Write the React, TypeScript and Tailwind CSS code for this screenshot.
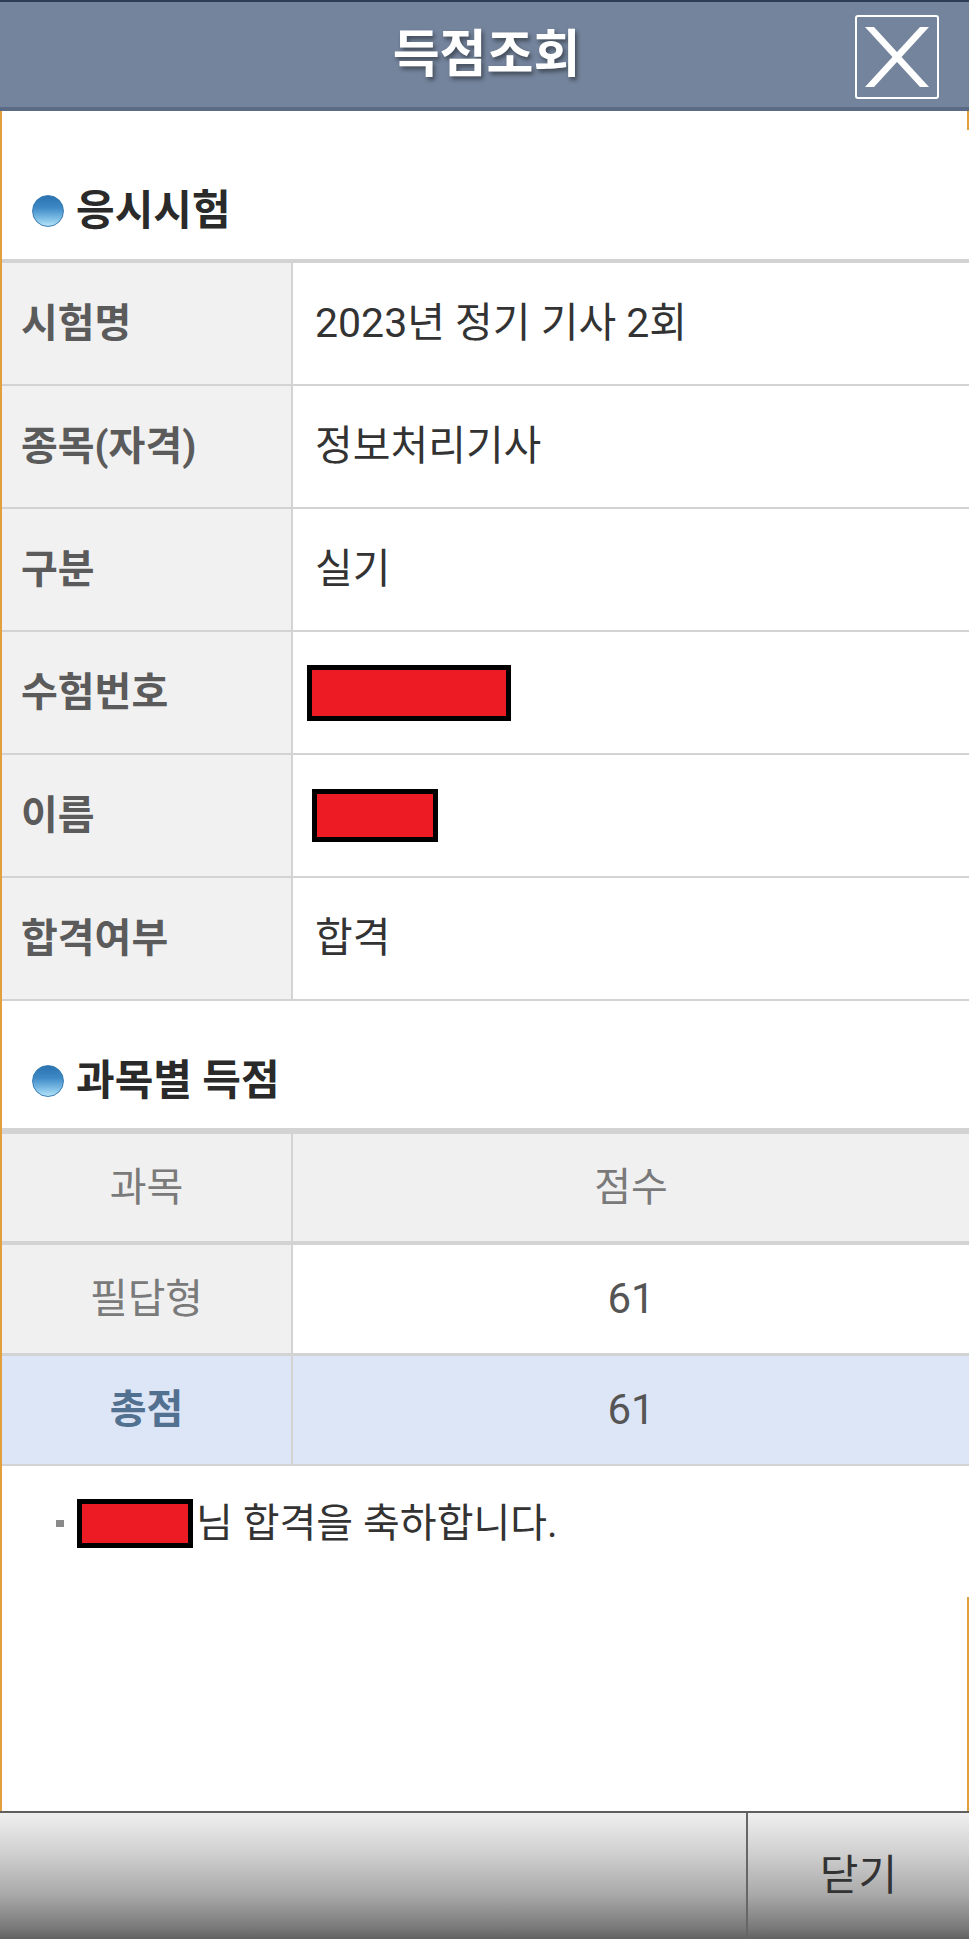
import React from "react";

const FONT = 'Roboto, "Noto Sans CJK KR", sans-serif';

function Bullet() {
  return (
    <span className="inline-block w-[32px] h-[32px] rounded-full border border-[#3a7db3] bg-[linear-gradient(to_bottom,#2a72b0_0%,#3f8ac6_40%,#7dbde6_75%,#b6e2f6_100%)] shrink-0" />
  );
}

function SectionHeading({ title, h }: { title: string; h: string }) {
  return (
    <div className={`${h} pt-[32px] flex items-center pl-[30px]`}>
      <Bullet />
      <span className="ml-[12px] text-[42px] font-bold text-[#2a2a2a] leading-none">{title}</span>
    </div>
  );
}

function InfoRow({ label, children }: { label: string; children: React.ReactNode }) {
  return (
    <div className="flex h-[123px] border-b-2 border-[#d3d3d3]">
      <div className="w-[291px] shrink-0 bg-[#f1f1f1] border-r-2 border-[#d3d3d3] flex items-center pl-[19px]">
        <span className="text-[40px] font-bold text-[#5b5b5b] leading-none">{label}</span>
      </div>
      <div className="flex-1 flex items-center pl-[22px]">{children}</div>
    </div>
  );
}

function Redact({ w, h }: { w: string; h: string }) {
  return <span className={`inline-block ${w} ${h} bg-[#ed1c24] border-[5px] border-black`} />;
}

export default function App() {
  return (
    <div className="w-[969px] h-[1939px] flex flex-col bg-white overflow-hidden" style={{ fontFamily: FONT }}>
      {/* Header */}
      <div className="relative h-[111px] shrink-0 bg-[#74849c] border-t-2 border-[#2f3e56] border-b-4 border-b-[#5b6a85] flex items-center justify-center">
        <span className="text-[51px] font-bold text-white leading-none ml-[4px] [text-shadow:2px_3px_4px_rgba(0,0,0,0.45)]">
          득점조회
        </span>
        <div className="absolute right-[30px] top-[13px] w-[84px] h-[84px] border-2 border-white rounded-[3px] flex items-center justify-center">
          <svg width="64" height="60" viewBox="0 0 64 60">
            <polygon points="0,0 9,0 64,60 55,60" fill="white" />
            <polygon points="55,0 64,0 9,60 0,60" fill="white" />
          </svg>
        </div>
      </div>

      {/* Body */}
      <div className="flex-1 flex flex-col border-l-2 border-r-2 border-[#e2a03c]">
        <div className="h-[19px] bg-white" />
        <div className="-mr-[2px] bg-white pb-[49px]">
          <SectionHeading title="응시시험" h="h-[129px]" />
          <div className="border-t-4 border-[#d3d3d3]">
            <InfoRow label="시험명">
              <span className="text-[41px] text-[#333] leading-none">2023년 정기 기사 2회</span>
            </InfoRow>
            <InfoRow label="종목(자격)">
              <span className="text-[41px] text-[#333] leading-none">정보처리기사</span>
            </InfoRow>
            <InfoRow label="구분">
              <span className="text-[41px] text-[#333] leading-none">실기</span>
            </InfoRow>
            <InfoRow label="수험번호">
              <span className="-ml-[8px] flex">
                <Redact w="w-[204px]" h="h-[56px]" />
              </span>
            </InfoRow>
            <InfoRow label="이름">
              <span className="-ml-[3px] flex">
                <Redact w="w-[126px]" h="h-[53px]" />
              </span>
            </InfoRow>
            <InfoRow label="합격여부">
              <span className="text-[41px] text-[#333] leading-none">합격</span>
            </InfoRow>
          </div>

          <SectionHeading title="과목별 득점" h="h-[127px]" />
          <div className="border-t-[6px] border-[#d3d3d3]">
            <div className="flex h-[111px] border-b-4 border-[#d3d3d3] bg-[#f0f0f0]">
              <div className="w-[291px] shrink-0 border-r-2 border-[#d3d3d3] flex items-center justify-center">
                <span className="text-[40px] text-[#7a7a7a] leading-none">과목</span>
              </div>
              <div className="flex-1 flex items-center justify-center">
                <span className="text-[40px] text-[#7a7a7a] leading-none">점수</span>
              </div>
            </div>
            <div className="flex h-[111px] border-b-[3px] border-[#d3d3d3]">
              <div className="w-[291px] shrink-0 bg-[#f0f0f0] border-r-2 border-[#d3d3d3] flex items-center justify-center">
                <span className="text-[41px] text-[#7a7a7a] leading-none">필답형</span>
              </div>
              <div className="flex-1 flex items-center justify-center">
                <span className="text-[42px] text-[#555] leading-none">61</span>
              </div>
            </div>
            <div className="flex h-[110px] border-b-2 border-[#d3d3d3] bg-[#dde6f7]">
              <div className="w-[291px] shrink-0 border-r-2 border-[#d3d3d3] flex items-center justify-center">
                <span className="text-[40px] font-bold text-[#52708f] leading-none">총점</span>
              </div>
              <div className="flex-1 flex items-center justify-center">
                <span className="text-[42px] text-[#555] leading-none">61</span>
              </div>
            </div>
          </div>

          <div className="flex items-center pl-[54px] mt-[33px]">
            <span className="inline-block w-[8px] h-[7px] bg-[#8a8a8a]" />
            <span className="ml-[13px] flex">
              <Redact w="w-[116px]" h="h-[49px]" />
            </span>
            <span className="ml-[3px] text-[40px] text-[#333] leading-none">님 합격을 축하합니다.</span>
          </div>
        </div>
        <div className="flex-1 bg-white" />
      </div>

      {/* Footer */}
      <div className="h-[128px] shrink-0 flex border-t-2 border-[#5f5f5f] bg-[linear-gradient(to_bottom,#efefef_0%,#d2d2d2_30%,#a9a9a9_65%,#777777_92%,#626262_100%)]">
        <div className="flex-1" />
        <div className="w-[223px] border-l-2 border-[#666] flex items-center justify-center">
          <span className="text-[42px] text-[#333] leading-none">닫기</span>
        </div>
      </div>
    </div>
  );
}
